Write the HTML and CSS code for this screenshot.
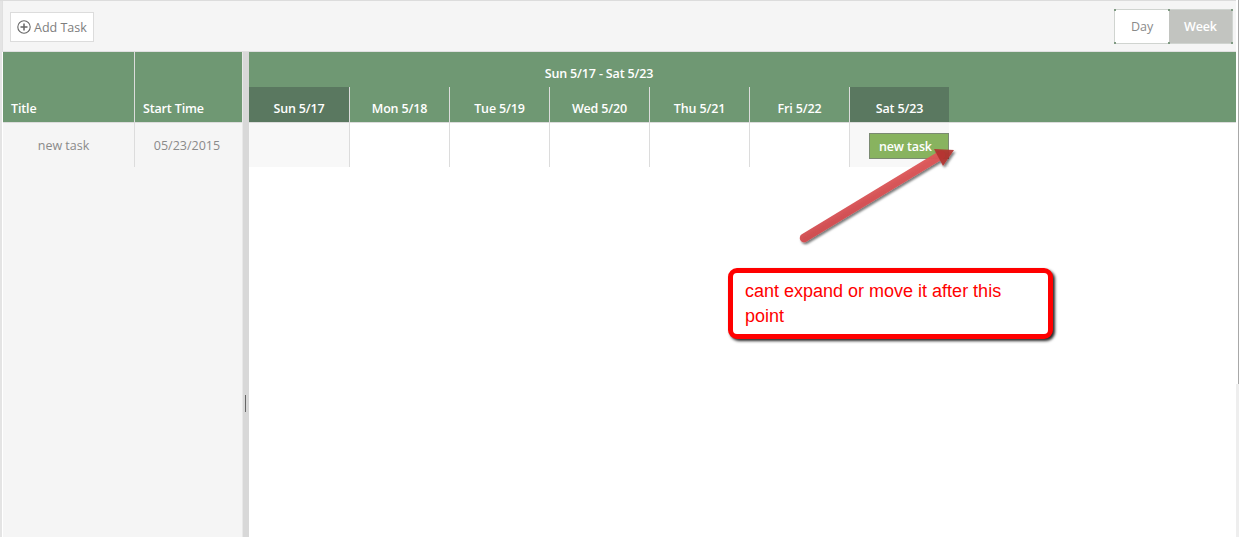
FILE: index.html
```html
<!DOCTYPE html>
<html lang="en">
<head>
<meta charset="utf-8">
<title>Gantt</title>
<link rel="stylesheet" href="styles.css">
</head>
<body>
<div class="app">
  <div class="toolbar">
    <button class="add">
      <svg class="plus" width="14" height="14" viewBox="0 0 14 14"><circle cx="7" cy="7" r="6.2" fill="none" stroke="#666" stroke-width="1.1"/><path d="M7 3.5v7M3.5 7h7" stroke="#666" stroke-width="1.5" fill="none"/></svg>
      <span>Add Task</span>
    </button>
    <div class="views">
      <div class="view">Day</div>
      <div class="view active">Week</div>
    </div>
  </div>
  <div class="main">
    <div class="left">
      <div class="lhead">
        <div class="lh title">Title</div>
        <div class="lh start">Start Time</div>
      </div>
      <div class="lrow">
        <div class="lc title">new task</div>
        <div class="lc start">05/23/2015</div>
      </div>
    </div>
    <div class="split"><div class="grip"></div></div>
    <div class="right">
      <div class="rhead">
        <div class="range">Sun 5/17 - Sat 5/23</div>
        <div class="days">
          <div class="day off">Sun 5/17</div>
          <div class="day">Mon 5/18</div>
          <div class="day">Tue 5/19</div>
          <div class="day">Wed 5/20</div>
          <div class="day">Thu 5/21</div>
          <div class="day">Fri 5/22</div>
          <div class="day off">Sat 5/23</div>
        </div>
      </div>
      <div class="cells">
        <div class="cell off"></div>
        <div class="cell"></div>
        <div class="cell"></div>
        <div class="cell"></div>
        <div class="cell"></div>
        <div class="cell"></div>
        <div class="cell off"><div class="task">new task</div></div>
      </div>
    </div>
    <div class="gutter"></div>
  </div>
  <div class="thumb"></div>
  <svg class="arrow" width="170" height="120" viewBox="0 0 170 120">
    <defs>
      <filter id="sh" x="-20%" y="-20%" width="140%" height="140%"><feDropShadow dx="1.5" dy="2" stdDeviation="1.2" flood-color="#000" flood-opacity=".55"/></filter>
      <linearGradient id="shaft" x1="0" y1="0" x2="0.5" y2="1"><stop offset="0" stop-color="#e8605f"/><stop offset="1" stop-color="#cc474c"/></linearGradient>
    </defs>
    <g filter="url(#sh)">
      <path d="M9 106 L146 23" stroke="url(#shaft)" stroke-width="8.5" stroke-linecap="round" fill="none" opacity=".95"/>
      <path d="M139 17 L159 18 L148 34 Z" fill="#b23330" opacity=".92"/>
    </g>
  </svg>
  <div class="note">cant expand or move it after this point</div>
</div>
</body>
</html>
```
FILE: styles.css
```css
* { box-sizing: border-box; }
html, body { margin: 0; height: 100%; background: #fff; overflow: hidden; }
.app {
  position: relative;
  width: 1239px;
  height: 537px;
  display: flex;
  flex-direction: column;
  padding-left: 2px;
  border-top: 1px solid #dcdcdc;
  font-family: "Open Sans", "Noto Sans", sans-serif;
  font-size: 12.5px;
  background: #fff;
}
.app::before {
  content: "";
  position: absolute;
  left: 0; top: 0; bottom: 0;
  width: 2px;
  background: #e4e4e4;
}
.toolbar {
  height: 51px;
  flex: none;
  background: #f5f5f5;
  display: flex;
  align-items: flex-start;
  justify-content: space-between;
  padding: 11px 4px 0 7px;
  border-left: 1px solid #e0e0e0;
  border-bottom: 1px solid #e0e0e0;
  margin-right: 2px;
}
.add {
  width: 84px;
  height: 30px;
  display: flex;
  align-items: center;
  gap: 3px;
  padding: 0 0 0 6px;
  background: #fff;
  border: 1px solid #dcdcdc;
  font: inherit;
  color: #7d7d7d;
}
.views {
  display: flex;
  margin-top: -3px;
  height: 35px;
  border: 1px solid #d0d4d0;
  background: #fff;
  position: relative;
}
.views::before, .views::after, .view::before, .view::after {
  content: "";
  position: absolute;
  width: 2px;
  height: 2px;
  background: #7f9a82;
}
.views::before { right: -1px; top: -1px; }
.views::after { right: -1px; bottom: -1px; }
.view::before { margin-left: -1px; top: -1px; }
.view::after { margin-left: -1px; bottom: -1px; }
.view {
  width: 54px;
  display: flex;
  align-items: center;
  color: #8a8a8a;
  padding-left: 16px;
}
.view.active {
  width: 63px;
  background: #c2c4c0;
  color: #fff;
  font-weight: 600;
  letter-spacing: -.15px;
  padding-left: 15px;
}
.view::before, .view::after { transform: translateX(-16px); }
.view.active::before, .view.active::after { transform: translateX(-15px); }
.main { flex: 1; display: flex; min-height: 0; padding-left: 1px; background: #fff; }
.left { width: 239px; flex: none; background: #f5f5f5; }
.lhead {
  display: flex;
  height: 71px;
  background: #6f9873;
  border-bottom: 1px solid #dcdcdc;
  color: #fff;
  font-weight: 600;
  letter-spacing: -.15px;
}
.lh { display: flex; align-items: flex-end; padding: 0 0 5px 8px; }
.title { width: 132px; flex: none; border-right: 1px solid #dcdcdc; }
.start { flex: 1; }
.lrow { display: flex; height: 44px; color: #8a8a8a; }
.lc { display: flex; align-items: center; justify-content: center; }
.lc.title { padding-right: 10px; }
.lc.start { padding-right: 3px; }
.split {
  width: 7px;
  flex: none;
  background: #d8d8d8;
  border-left: 1px solid #e8e8e8;
  display: flex;
  justify-content: center;
  padding-top: 343px;
}
.grip { width: 1px; height: 17px; background: #666; margin-right: 1px; }
.right { flex: 1; min-width: 0; }
.rhead { height: 71px; background: #6f9873; border-bottom: 1px solid #dcdcdc; color: #fff; font-weight: 600; letter-spacing: -.15px; }
.range { height: 35px; width: 700px; text-align: center; line-height: 43px; }
.days, .cells { display: flex; width: 700px; }
.day {
  width: 100px;
  height: 35px;
  display: flex;
  align-items: center;
  justify-content: center;
  border-left: 1px solid #dcdcdc;
  padding-top: 8px;
}
.day:first-child { border-left: 0; }
.day.off { background: #5a7860; }
.cells { height: 44px; }
.cell { width: 100px; border-left: 1px solid #dcdcdc; position: relative; }
.cell:first-child { border-left: 0; }
.cell.off { background: #f8f8f8; }
.task {
  position: absolute;
  left: 19px;
  top: 10px;
  width: 80px;
  height: 26px;
  background: #88b35f;
  border: 1px solid #7b8a72;
  color: #fff;
  display: flex;
  align-items: center;
  padding-left: 9px;
  font-weight: 600;
  letter-spacing: -.15px;
}
.gutter { width: 3px; flex: none; background: #fff; }
.thumb { position: absolute; right: 0; top: -1px; bottom: 0; width: 3px; background: linear-gradient(#fff, #fff) left top / 2px 384px no-repeat, #eee; }
.thumb::after { content: ""; position: absolute; right: 0; top: 0; width: 1px; height: 384px; background: #a8a8a8; }
.arrow { position: absolute; left: 795px; top: 131px; }
.note {
  position: absolute;
  left: 728px;
  top: 267px;
  width: 325px;
  height: 71px;
  padding: 6px 12px;
  background: #fff;
  border: 5px solid #f00;
  border-radius: 9px;
  box-shadow: 2px 2px 3px rgba(0,0,0,.85);
  color: #f00;
  font: 18px/25px "Liberation Sans", Arial, sans-serif;
}
```
